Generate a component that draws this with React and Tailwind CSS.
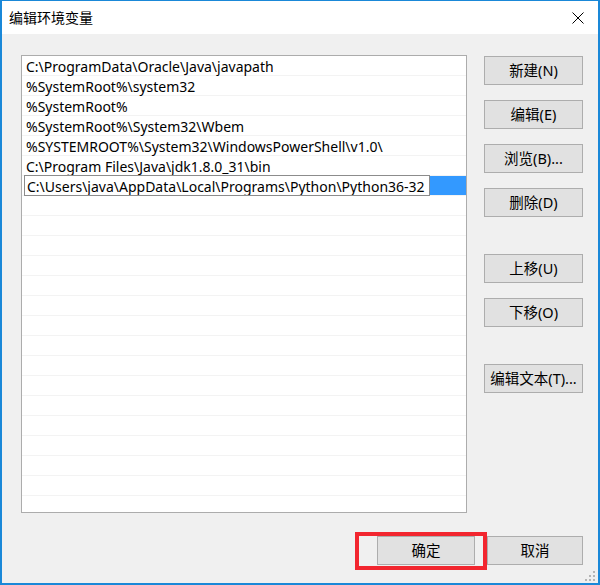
const paths = [
  "C:\\ProgramData\\Oracle\\Java\\javapath",
  "%SystemRoot%\\system32",
  "%SystemRoot%",
  "%SystemRoot%\\System32\\Wbem",
  "%SYSTEMROOT%\\System32\\WindowsPowerShell\\v1.0\\",
  "C:\\Program Files\\Java\\jdk1.8.0_31\\bin",
];

const editing = "C:\\Users\\java\\AppData\\Local\\Programs\\Python\\Python36-32";

const font = { fontFamily: '"Noto Sans", "Noto Sans CJK SC", sans-serif' };

const Btn = ({ children, className = "" }) => (
  <button
    className={
      "h-[29px] bg-[#e1e1e1] border border-[#adadad] text-[14.5px] text-black flex items-center justify-center " +
      className
    }
  >
    {children}
  </button>
);

export default function App() {
  return (
    <div
      className="relative w-[600px] h-[585px] bg-[#f0f0f0] border-x-2 border-b-2 border-t border-[#1a88d8] flex flex-col"
      style={font}
    >
      {/* title bar */}
      <div className="h-[33px] bg-white flex items-center justify-between pl-[7px] pr-[14px]">
        <span className="text-[14px] text-black">编辑环境变量</span>
        <svg width="12" height="12" viewBox="0 0 12 12">
          <path d="M0.5 0.5 L11.5 11.5 M11.5 0.5 L0.5 11.5" stroke="#000" strokeWidth="1" />
        </svg>
      </div>

      <div className="flex-1 flex flex-col pt-[21px] pl-[19px] pr-[15px]">
        <div className="flex gap-[17px]">
          {/* list */}
          <div className="w-[446px] h-[458px] bg-white border border-[#acacac] overflow-hidden">
            {paths.map((p) => (
              <div
                key={p}
                className="h-[20px] border-b border-[#f3f3f3] pl-[4px] pt-[2px] flex items-center text-[14px] text-black whitespace-nowrap"
              >
                {p}
              </div>
            ))}
            <div className="h-[20px] flex border-b border-[#f3f3f3]">
              <div className="ml-[2px] w-[406px] h-[21px] -mt-px bg-white border border-[#8c8c8c] pl-[2px] pt-[2px] flex items-center text-[14px] text-black whitespace-nowrap overflow-hidden">
                {editing}
              </div>
              <div className="flex-1 bg-[#3399ff]" />
            </div>
            {Array.from({ length: 16 }).map((_, i) => (
              <div key={i} className="h-[20px] border-b border-[#f3f3f3]" />
            ))}
          </div>

          {/* side buttons */}
          <div className="w-[99px] flex flex-col pt-px">
            <Btn>新建(N)</Btn>
            <Btn className="mt-[15px]">编辑(E)</Btn>
            <Btn className="mt-[15px]">浏览(B)...</Btn>
            <Btn className="mt-[15px]">删除(D)</Btn>
            <Btn className="mt-[37px]">上移(U)</Btn>
            <Btn className="mt-[15px]">下移(O)</Btn>
            <Btn className="mt-[37px]">编辑文本(T)...</Btn>
          </div>
        </div>

        {/* bottom buttons */}
        <div className="flex justify-end gap-[12px] mt-[23px]">
          <Btn className="w-[98px] border-[#0078d7]">确定</Btn>
          <Btn className="w-[96px]">取消</Btn>
        </div>
      </div>

      {/* annotation box */}
      <div className="absolute left-[353px] top-[531px] w-[132px] h-[38px] border-4 border-[#f2262f]" />

      {/* resize grip */}
      <svg className="absolute right-[2px] bottom-[1px]" width="12" height="12" viewBox="0 0 12 12">
        <g fill="#b5b5b5">
          <rect x="9" y="1" width="2" height="2" />
          <rect x="5" y="5" width="2" height="2" />
          <rect x="9" y="5" width="2" height="2" />
          <rect x="1" y="9" width="2" height="2" />
          <rect x="5" y="9" width="2" height="2" />
          <rect x="9" y="9" width="2" height="2" />
        </g>
      </svg>
    </div>
  );
}
